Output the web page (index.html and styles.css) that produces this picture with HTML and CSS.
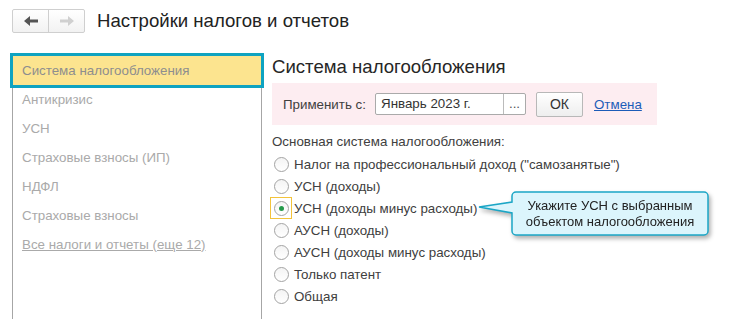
FILE: index.html
```html
<!DOCTYPE html>
<html lang="ru">
<head>
    <meta charset="UTF-8" />
    <title>Настройки налогов и отчетов</title>
    <link rel="stylesheet" href="styles.css">
</head>
<body>

<div class="header">
    <div class="nav">
        <span class="nav-btn">
            <svg width="14" height="10" viewBox="0 0 14 10"><polygon points="0,5 6,0 6,3.5 14,3.5 14,6.5 6,6.5 6,10" fill="#555"/></svg>
        </span>
        <span class="nav-btn">
            <svg width="14" height="10" viewBox="0 0 14 10"><polygon points="14,5 8,0 8,3.5 0,3.5 0,6.5 8,6.5 8,10" fill="#d0d0d0"/></svg>
        </span>
    </div>
    <h1>Настройки налогов и отчетов</h1>
</div>

<div class="main">
    <div class="sidebar">
        <div class="side-item selected">Система налогообложения</div>
        <div class="side-item">Антикризис</div>
        <div class="side-item">УСН</div>
        <div class="side-item">Страховые взносы (ИП)</div>
        <div class="side-item">НДФЛ</div>
        <div class="side-item">Страховые взносы</div>
        <div class="side-item"><a href="#">Все налоги и отчеты (еще 12)</a></div>
    </div>

    <div class="content">
        <h2>Система налогообложения</h2>

        <div class="apply">
            <span class="apply-label">Применить с:</span>
            <div class="field">
                <span class="field-value">Январь 2023 г.</span>
                <span class="field-btn">...</span>
            </div>
            <button class="ok">ОК</button>
            <a class="cancel" href="#">Отмена</a>
        </div>

        <div class="group-title">Основная система налогообложения:</div>
        <div class="radios">
            <div class="radio-row"><span class="radio-box"><span class="radio"></span></span>Налог на профессиональный доход ("самозанятые")</div>
            <div class="radio-row"><span class="radio-box"><span class="radio"></span></span>УСН (доходы)</div>
            <div class="radio-row">
                <span class="radio-box focus"><span class="radio checked"></span></span>УСН (доходы минус расходы)
                <div class="callout">
                    <svg width="234" height="50" viewBox="0 0 234 50">
                        <path d="M38,2 H226 a4,4 0 0 1 4,4 V41 a4,4 0 0 1 -4,4 H38 a4,4 0 0 1 -4,-4 V23 L1,17 L34,12 V6 a4,4 0 0 1 4,-4 Z" fill="#dcf5fc" stroke="#1ba6c6" stroke-width="1.5"/>
                    </svg>
                    <div class="callout-text">Укажите УСН с выбранным<br>объектом налогообложения</div>
                </div>
            </div>
            <div class="radio-row"><span class="radio-box"><span class="radio"></span></span>АУСН (доходы)</div>
            <div class="radio-row"><span class="radio-box"><span class="radio"></span></span>АУСН (доходы минус расходы)</div>
            <div class="radio-row"><span class="radio-box"><span class="radio"></span></span>Только патент</div>
            <div class="radio-row"><span class="radio-box"><span class="radio"></span></span>Общая</div>
        </div>
    </div>
</div>

</body>
</html>
```

FILE: styles.css
```css
body {
  margin: 0;
  font-family: "Liberation Sans", Arial, sans-serif;
  font-size: 13.33px;
  color: #404040;
  background: white;
  overflow: hidden;
}
.header {
  display: flex;
  align-items: center;
  padding: 9px 0 0 12px;
}
.nav {
  display: flex;
  width: 73px;
  height: 24px;
  box-sizing: border-box;
  border: 1px solid #cfcfcf;
  border-radius: 2px;
  background: linear-gradient(#ffffff, #f2f2f2);
}
.nav-btn {
  flex: 1;
  display: flex;
  align-items: center;
  justify-content: center;
}
.nav-btn:first-child {
  border-right: 1px solid #cfcfcf;
}
h1 {
  margin: 0 0 0 12px;
  font-size: 18.6px;
  font-weight: normal;
  line-height: 24px;
  color: #222;
}
.main {
  display: flex;
  margin-top: 20px;
}
.sidebar {
  margin-left: 12px;
  width: 250px;
  height: 266px;
  box-sizing: border-box;
  border-left: 1px solid #a6a6a6;
  border-right: 1px solid #a6a6a6;
}
.side-item {
  height: 29px;
  line-height: 29px;
  padding-left: 9px;
  color: #aaa;
}
.side-item a {
  color: #aaa;
}
.side-item.selected {
  height: 35px;
  line-height: 29px;
  box-sizing: border-box;
  margin: 0 -3px -3px -3px;
  border: 3px solid #0ea3c1;
  background: #fce48f;
  color: #8e8e8e;
}
.content {
  margin-left: 10px;
}
h2 {
  margin: 0;
  font-size: 18.6px;
  font-weight: normal;
  line-height: 28px;
  color: #262626;
}
.apply {
  display: flex;
  align-items: center;
  margin-top: 2px;
  width: 385px;
  height: 42px;
  padding-left: 11px;
  box-sizing: border-box;
  background: #fdedf1;
}
.apply-label {
  width: 92px;
}
.field {
  display: flex;
  width: 151px;
  height: 22px;
  box-sizing: border-box;
  border: 1px solid #aaa;
  border-radius: 2px;
  background: white;
}
.field-value {
  flex: 1;
  padding-left: 5px;
  line-height: 20px;
  color: #333;
}
.field-btn {
  width: 21px;
  border-left: 1px solid #bbb;
  text-align: center;
  line-height: 20px;
  color: #555;
}
.ok {
  margin-left: 10px;
  width: 47px;
  height: 25px;
  border: 1px solid #b8b8b8;
  border-radius: 2px;
  background: linear-gradient(#ffffff, #eeeeee);
  font-family: inherit;
  font-size: 14px;
  color: #333;
  padding: 0;
}
.cancel {
  margin-left: 11px;
  color: #1c5cb8;
}
.group-title {
  margin-top: 8px;
  line-height: 18px;
}
.radios {
  margin-top: 2px;
}
.radio-row {
  position: relative;
  display: flex;
  align-items: center;
  height: 22px;
}
.radio-box {
  display: flex;
  align-items: center;
  justify-content: center;
  width: 22px;
  height: 22px;
  box-sizing: border-box;
  margin-left: -2px;
  margin-right: 2px;
  border: 1px solid transparent;
}
.radio-box.focus {
  border-color: #f3c33b;
}
.radio {
  display: flex;
  align-items: center;
  justify-content: center;
  width: 15px;
  height: 15px;
  box-sizing: border-box;
  border: 1px solid #a3a3a3;
  border-radius: 50%;
  background: linear-gradient(#f4f4f4, #ffffff);
}
.radio.checked::after {
  content: "";
  width: 5px;
  height: 5px;
  border-radius: 50%;
  background: #249a4a;
}
.callout {
  position: absolute;
  left: 206px;
  top: -7px;
  width: 234px;
  height: 50px;
  filter: drop-shadow(2px 3px 2px rgba(0, 0, 0, 0.3));
}
.callout svg {
  display: block;
}
.callout-text {
  position: absolute;
  left: 34px;
  top: 8px;
  width: 196px;
  font-size: 13px;
  text-align: center;
  line-height: 16px;
  color: #222;
}
```
